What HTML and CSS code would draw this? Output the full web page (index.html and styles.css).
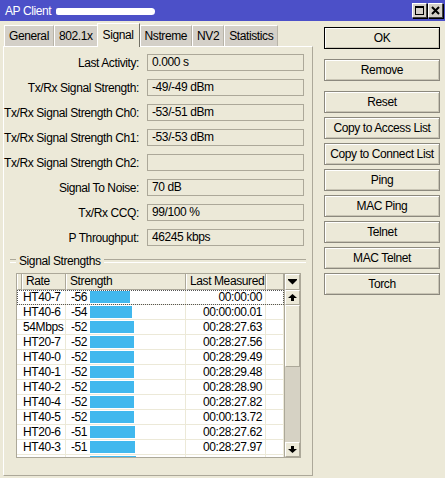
FILE: index.html
```html
<!DOCTYPE html>
<html>

<head>
	<link rel="stylesheet" href="styles.css">
</head>

<body>
	<div class="window">
		<div class="titlebar">
			<span class="title">AP Client</span>
			<span class="mac"></span>
			<span class="spacer"></span>
			<span class="tbtn">
				<svg width="13" height="13" viewBox="0 0 13 13"><rect x="2.5" y="2.5" width="8" height="8" fill="none" stroke="#000"/><rect x="2" y="2" width="9" height="2" fill="#000"/></svg>
			</span>
			<span class="tbtn">
				<svg width="13" height="13" viewBox="0 0 13 13"><path d="M3 3 L10 10 M10 3 L3 10" stroke="#000" stroke-width="2"/></svg>
			</span>
		</div>

		<div class="main">
			<div class="left">
				<div class="tabs">
					<span class="tab">General</span>
					<span class="tab">802.1x</span>
					<span class="tab active">Signal</span>
					<span class="tab">Nstreme</span>
					<span class="tab">NV2</span>
					<span class="tab">Statistics</span>
				</div>
				<div class="panel">
					<div class="field"><label>Last Activity:</label><div class="value">0.000 s</div></div>
					<div class="field"><label>Tx/Rx Signal Strength:</label><div class="value">-49/-49 dBm</div></div>
					<div class="field"><label>Tx/Rx Signal Strength Ch0:</label><div class="value">-53/-51 dBm</div></div>
					<div class="field"><label>Tx/Rx Signal Strength Ch1:</label><div class="value">-53/-53 dBm</div></div>
					<div class="field"><label>Tx/Rx Signal Strength Ch2:</label><div class="value"></div></div>
					<div class="field"><label>Signal To Noise:</label><div class="value">70 dB</div></div>
					<div class="field"><label>Tx/Rx CCQ:</label><div class="value">99/100 %</div></div>
					<div class="field"><label>P Throughput:</label><div class="value">46245 kbps</div></div>

					<div class="group">
						<div class="group-title"><span>Signal Strengths</span></div>
						<div class="list">
							<div class="list-main">
								<div class="head">
									<div class="hcell"></div>
									<div class="hcell">Rate</div>
									<div class="hcell">Strength</div>
									<div class="hcell">Last Measured</div>
									<div class="hcell"></div>
								</div>
								<div class="rows">
									<div class="row focus"><div class="c-rate">HT40-7</div><div class="c-str"><span class="num">-56</span><span class="bar" style="width:40px"></span></div><div class="c-time">00:00:00</div><div></div></div>
									<div class="row"><div class="c-rate">HT40-6</div><div class="c-str"><span class="num">-54</span><span class="bar" style="width:42px"></span></div><div class="c-time">00:00:00.01</div><div></div></div>
									<div class="row"><div class="c-rate">54Mbps</div><div class="c-str"><span class="num">-52</span><span class="bar" style="width:44px"></span></div><div class="c-time">00:28:27.63</div><div></div></div>
									<div class="row"><div class="c-rate">HT20-7</div><div class="c-str"><span class="num">-52</span><span class="bar" style="width:44px"></span></div><div class="c-time">00:28:27.56</div><div></div></div>
									<div class="row"><div class="c-rate">HT40-0</div><div class="c-str"><span class="num">-52</span><span class="bar" style="width:44px"></span></div><div class="c-time">00:28:29.49</div><div></div></div>
									<div class="row"><div class="c-rate">HT40-1</div><div class="c-str"><span class="num">-52</span><span class="bar" style="width:44px"></span></div><div class="c-time">00:28:29.48</div><div></div></div>
									<div class="row"><div class="c-rate">HT40-2</div><div class="c-str"><span class="num">-52</span><span class="bar" style="width:44px"></span></div><div class="c-time">00:28:28.90</div><div></div></div>
									<div class="row"><div class="c-rate">HT40-4</div><div class="c-str"><span class="num">-52</span><span class="bar" style="width:44px"></span></div><div class="c-time">00:28:27.82</div><div></div></div>
									<div class="row"><div class="c-rate">HT40-5</div><div class="c-str"><span class="num">-52</span><span class="bar" style="width:44px"></span></div><div class="c-time">00:00:13.72</div><div></div></div>
									<div class="row"><div class="c-rate">HT20-6</div><div class="c-str"><span class="num">-51</span><span class="bar" style="width:45px"></span></div><div class="c-time">00:28:27.62</div><div></div></div>
									<div class="row"><div class="c-rate">HT40-3</div><div class="c-str"><span class="num">-51</span><span class="bar" style="width:45px"></span></div><div class="c-time">00:28:27.97</div><div></div></div>
									<div class="row"><div class="c-rate">48Mbps</div><div class="c-str"><span class="num">-50</span><span class="bar" style="width:46px"></span></div><div class="c-time">00:28:28.40</div><div></div></div>
								</div>
							</div>
							<div class="scroll">
								<div class="sbtn drop">
									<svg width="9" height="6" viewBox="0 0 9 6"><path d="M0 0 H9 V1 L4.5 5.5 L0 1 Z" fill="#000"/></svg>
								</div>
								<div class="sbtn arrow">
									<svg width="9" height="7" viewBox="0 0 9 7"><path d="M4.5 0 L9 4 H6 V7 H3 V4 H0 Z" fill="#000"/></svg>
								</div>
								<div class="thumb"></div>
								<div class="track"></div>
								<div class="sbtn arrow">
									<svg width="9" height="7" viewBox="0 0 9 7"><path d="M4.5 7 L9 3 H6 V0 H3 V3 H0 Z" fill="#000"/></svg>
								</div>
							</div>
						</div>
					</div>
				</div>
			</div>

			<div class="buttons">
				<button class="btn default">OK</button>
				<button class="btn spaced">Remove</button>
				<button class="btn">Reset</button>
				<button class="btn">Copy to Access List</button>
				<button class="btn">Copy to Connect List</button>
				<button class="btn">Ping</button>
				<button class="btn">MAC Ping</button>
				<button class="btn">Telnet</button>
				<button class="btn">MAC Telnet</button>
				<button class="btn">Torch</button>
			</div>
		</div>
	</div>
</body>

</html>
```

FILE: styles.css
```css
* {
	box-sizing: border-box;
}

body {
	margin: 0;
	background-color: #ece9d8;
	font-family: "Liberation Sans", Arial, sans-serif;
	font-size: 12px;
	letter-spacing: -0.4px;
	color: #000;
}

.window {
	width: 445px;
	height: 478px;
	overflow: hidden;
}

/* title bar */
.titlebar {
	height: 21px;
	background-color: #4c50c8;
	display: flex;
	align-items: center;
	padding-left: 5px;
	color: #fff;
}

.title {
	font-size: 12px;
	padding-top: 1px;
}

.mac {
	width: 99px;
	height: 7px;
	margin-left: 5px;
	margin-top: 2px;
	background-color: #fff;
	border-radius: 3px 5px 5px 3px;
}

.spacer {
	flex: 1;
}

.tbtn {
	width: 15px;
	height: 15px;
	margin-right: 1px;
	background-color: #d4d0c8;
	border: 1px solid #404040;
	border-top-color: #fff;
	border-left-color: #fff;
	box-shadow: 1px 1px 0 #000;
	display: flex;
	align-items: center;
	justify-content: center;
}

.tbtn:last-child {
	margin-right: 2px;
}

.main {
	display: flex;
	padding: 2px 0 0 3px;
}

.left {
	width: 310px;
}

/* tabs */
.tabs {
	display: flex;
	align-items: flex-end;
	height: 23px;
	padding-left: 1px;
}

.tab {
	height: 21px;
	line-height: 20px;
	padding: 0 4px;
	background-color: #d4d0c8;
	border-top: 1px solid #fff;
	border-left: 1px solid #fff;
	border-right: 1px solid #b8b4a8;
}

.tab.active {
	height: 24px;
	line-height: 22px;
	margin: 0 0 -1px -1px;
	padding: 0 5px;
	background-color: #ece9d8;
	border-right-color: #716f64;
	position: relative;
	z-index: 1;
}

.panel {
	height: 430px;
	border: 1px solid #aca899;
	border-top-color: #fff;
	border-left-color: #fff;
	padding-top: 7px;
}

/* fields */
.field {
	display: flex;
	align-items: center;
	height: 17px;
	margin-bottom: 8px;
}

.field label {
	width: 135px;
	text-align: right;
	margin-right: 8px;
	white-space: nowrap;
}

.value {
	width: 157px;
	height: 17px;
	line-height: 15px;
	padding-left: 4px;
	border: 1px solid #aca899;
}

/* signal strengths list */
.group {
	margin: -3px 6px 0;
}

.group-title {
	height: 20px;
	display: flex;
	align-items: center;
}

.group-title::before,
.group-title::after {
	content: "";
	height: 2px;
	border-top: 1px solid #aca899;
	border-bottom: 1px solid #fff;
}

.group-title::before {
	width: 6px;
}

.group-title::after {
	flex: 1;
}

.group-title span {
	padding: 0 3px;
}

.list {
	display: flex;
	width: 285px;
	height: 185px;
	margin: 2px 0 0 6px;
	border: 1px solid #aca899;
	background-color: #fff;
}

.list-main {
	width: 267px;
	overflow: hidden;
}

.head {
	display: grid;
	grid-template-columns: 5px 44px 120px 80px 18px;
	height: 16px;
	background-color: #ece9d8;
}

.hcell {
	line-height: 15px;
	padding-left: 3px;
	border-left: 1px solid #fff;
	border-right: 1px solid #aca899;
	border-bottom: 1px solid #aca899;
	white-space: nowrap;
	overflow: hidden;
}

.rows {
	height: 167px;
	overflow: hidden;
}

.row {
	display: grid;
	grid-template-columns: 49px 120px 80px 18px;
	height: 15px;
}

.row > div {
	border-right: 1px solid #ece9d8;
	border-bottom: 1px solid #ece9d8;
	line-height: 14px;
	white-space: nowrap;
}

.row.focus {
	outline: 1px dotted #555;
	outline-offset: -1px;
}

.c-rate {
	padding-left: 6px;
}

.c-str {
	display: flex;
	align-items: flex-start;
	padding-left: 5px;
}

.num {
	width: 19px;
}

.bar {
	height: 12px;
	margin-top: 1px;
	background-color: #41b8ee;
}

.c-time {
	text-align: right;
	padding-right: 3px;
}

/* scrollbar */
.scroll {
	width: 16px;
	display: flex;
	flex-direction: column;
	border-left: 1px solid #aca899;
	background-color: #ece9d8;
}

.sbtn {
	display: flex;
	align-items: center;
	justify-content: center;
	border: 1px solid #aca899;
	border-top-color: #fff;
	border-left-color: #fff;
}

.drop {
	height: 16px;
}

.arrow {
	height: 15px;
}

.thumb {
	height: 62px;
	border: 1px solid #aca899;
	border-top-color: #fff;
	border-left-color: #fff;
}

.track {
	flex: 1;
	background-color: #d6d2c4;
}

/* right side buttons */
.buttons {
	width: 116px;
	margin-left: 11px;
	padding-top: 4px;
	display: flex;
	flex-direction: column;
}

.btn {
	height: 22px;
	margin-bottom: 4px;
	padding: 0;
	font-family: inherit;
	font-size: 12px;
	letter-spacing: -0.4px;
	color: #000;
	background-color: #ece9d8;
	border: 1px solid #8c897e;
	box-shadow: inset 1px 1px 0 #fff, inset -1px -1px 0 #c9c5b5;
}

.btn.default {
	border-color: #000;
	margin-bottom: 10px;
}

.btn.spaced {
	margin-bottom: 10px;
}
```
